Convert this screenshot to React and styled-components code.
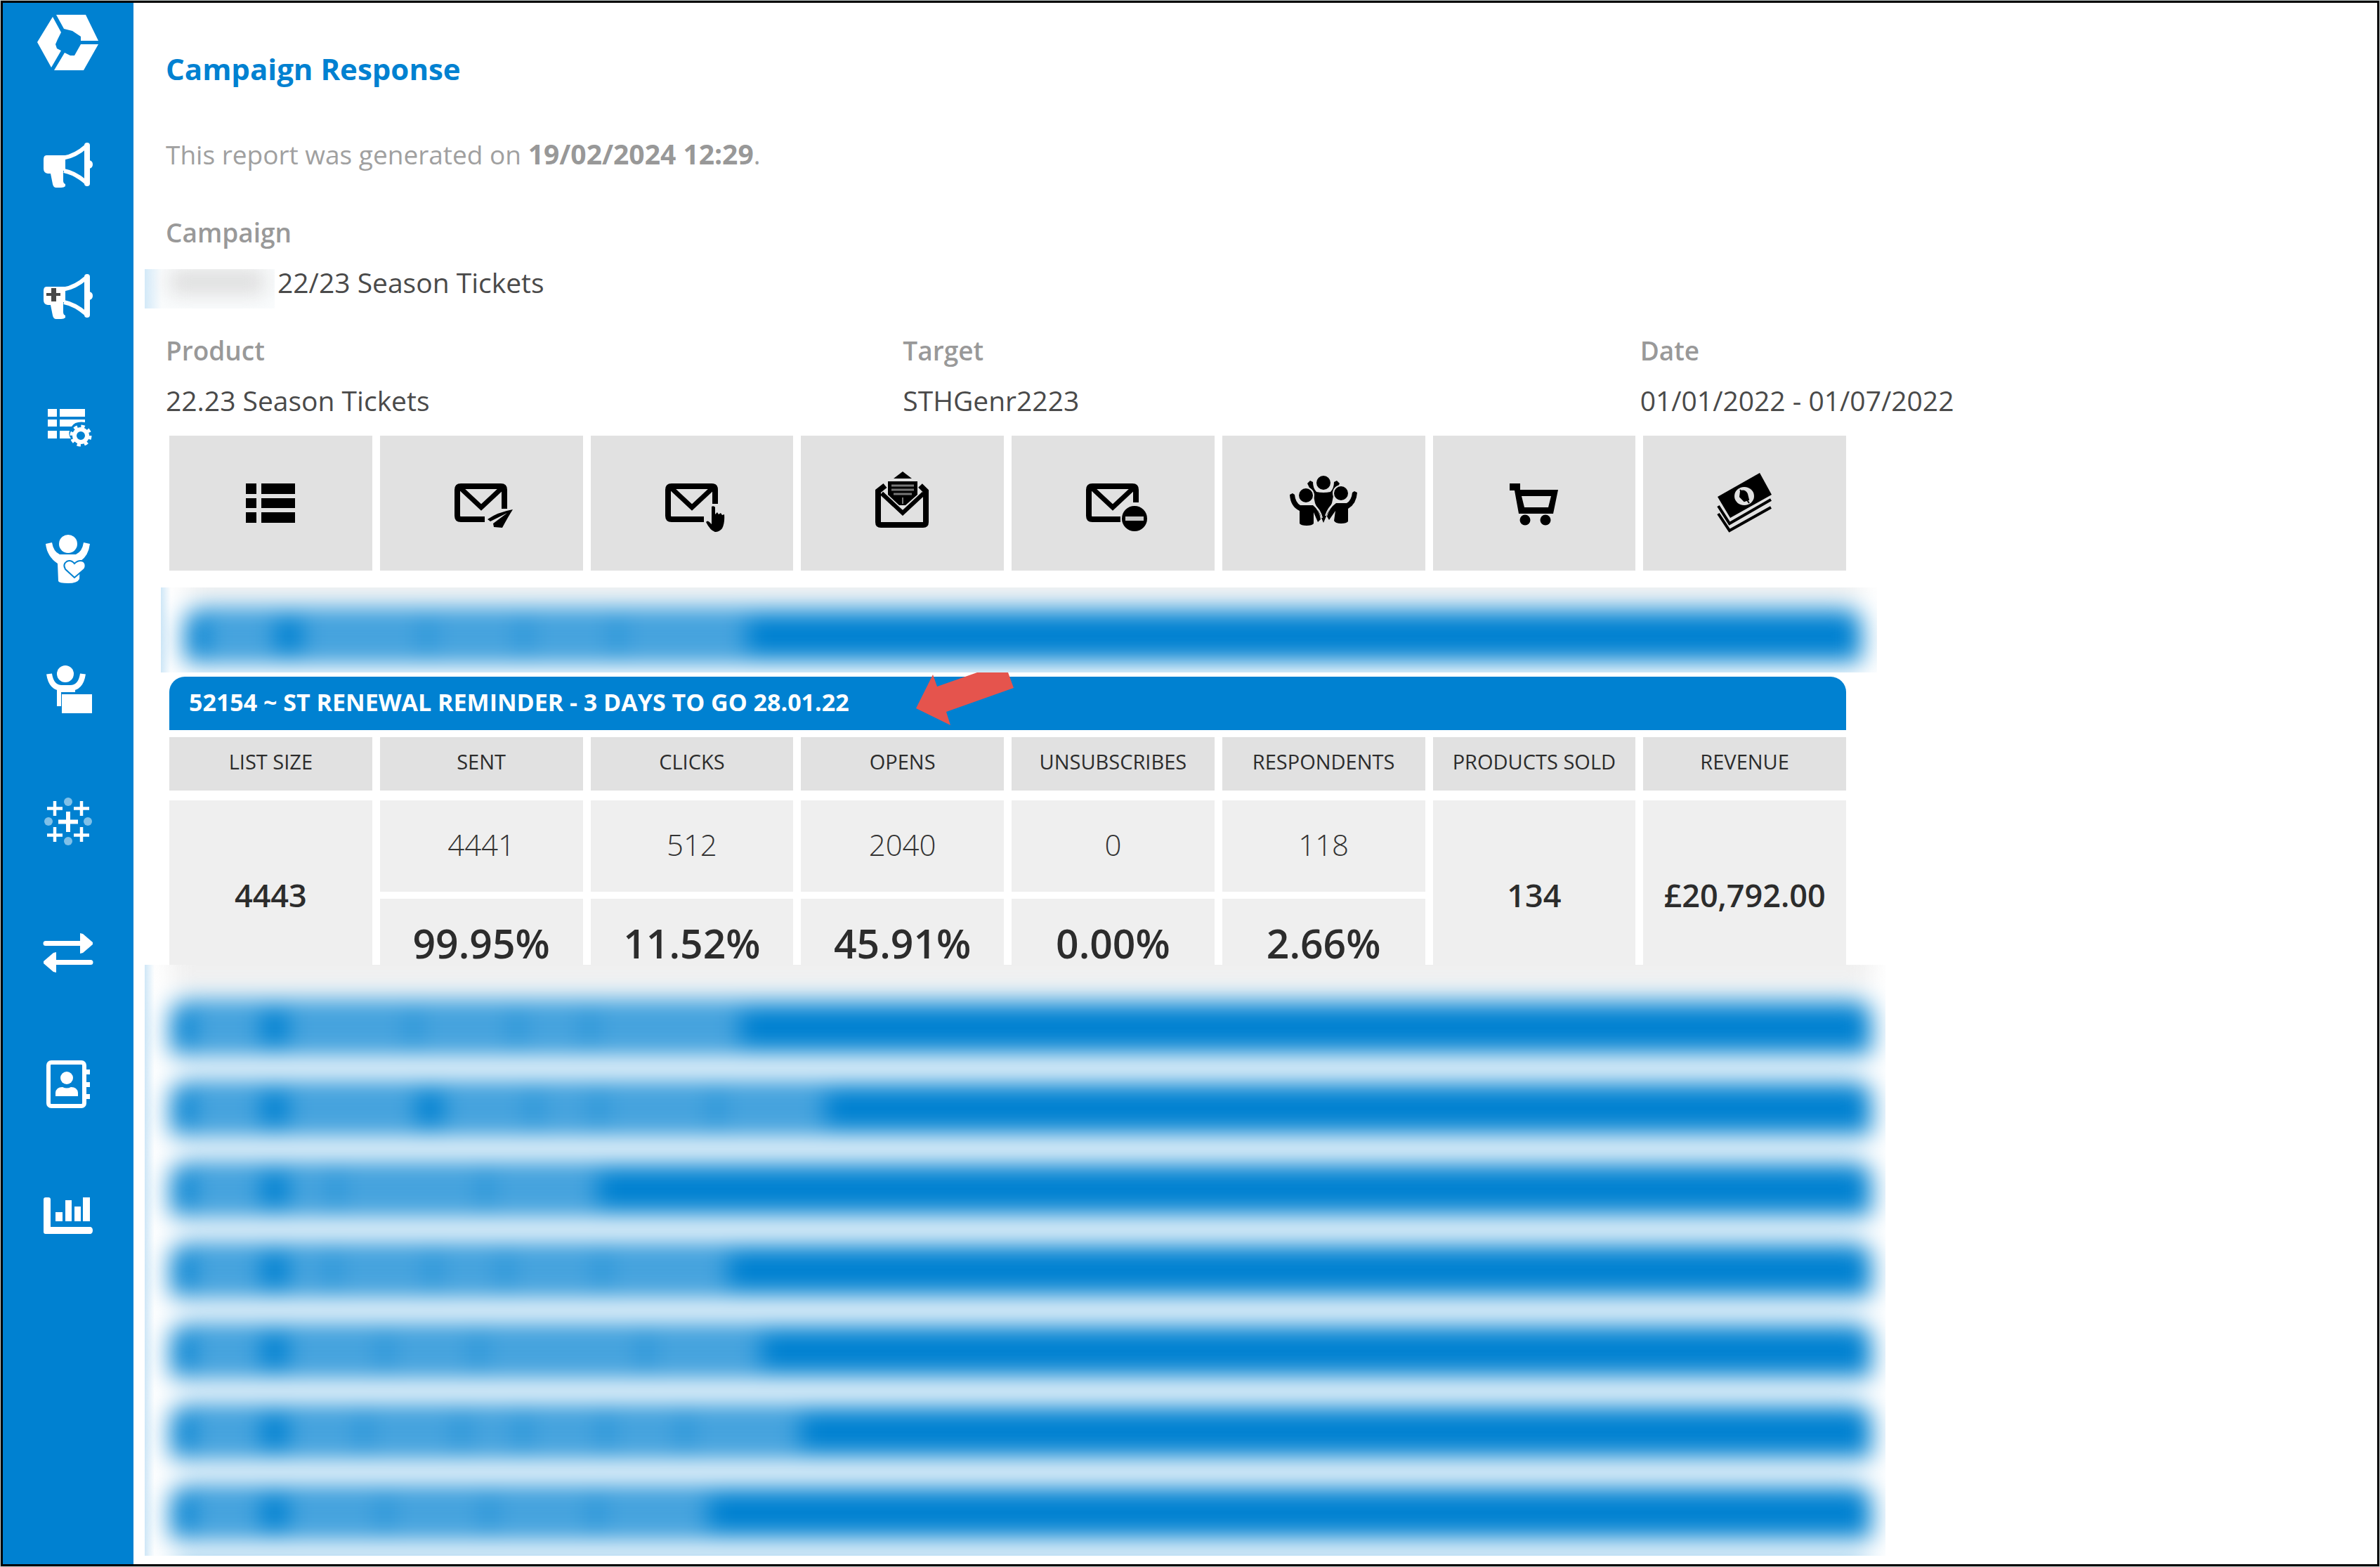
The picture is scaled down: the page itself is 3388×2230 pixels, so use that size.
import React from "react";
import styled, { createGlobalStyle } from "styled-components";

const BLUE = "#0081d1";

const GlobalStyle = createGlobalStyle`
  * { box-sizing: border-box; }
  body {
    margin: 0;
    background: #fff;
    font-family: "Open Sans", "Noto Sans", sans-serif;
    color: #3f3f3f;
  }
`;

const Frame = styled.div`
  display: flex;
  min-height: 100vh;
  border: 1px solid #c4cccb;
  outline: 3px solid #000;
  outline-offset: -4px;
  padding: 3px;
`;

const Sidebar = styled.nav`
  flex: 0 0 186px;
  display: flex;
  flex-direction: column;
  background: ${BLUE};
`;

const Logo = styled.a`
  display: flex;
  justify-content: center;
  height: 136px;
  padding-top: 16px;
`;

const NavLink = styled.a`
  display: flex;
  align-items: center;
  justify-content: center;
  height: 187px;
  color: #fff;
`;

const Main = styled.main`
  flex: 1;
  min-width: 0;
  padding: 66px 0 12px 46px;
`;

const Title = styled.h1`
  margin: 0 0 68px;
  font-size: 42px;
  line-height: 56px;
  font-weight: 700;
  color: ${BLUE};
`;

const Generated = styled.p`
  margin: 0 0 60px;
  font-size: 37px;
  line-height: 52px;
  color: #a0a0a0;

  strong {
    font-size: 39px;
    line-height: 48px;
    font-weight: 700;
    color: #989898;
  }
`;

const Facts = styled.dl`
  display: grid;
  grid-template-columns: repeat(3, 1fr);
  row-gap: 35px;
  margin: 0 0 22px;
`;

const Fact = styled.div`
  grid-column: ${(p) => (p.$wide ? "1 / -1" : "auto")};
`;

const Label = styled.dt`
  margin-bottom: 18px;
  font-size: 37px;
  line-height: 50px;
  font-weight: 600;
  color: #999;
`;

const Value = styled.dd`
  display: flex;
  margin: 0;
  font-size: 39px;
  line-height: 56px;
  color: #4a4a4a;
`;

const HiddenName = styled.span`
  width: 185px;
  height: 56px;
  margin: 9px 4px 0 -30px;
  padding: 0 14px 20px 36px;
  overflow: hidden;
  background: linear-gradient(to right, #d3e9f8, #fafcfd 24px);

  &::before {
    content: "";
    display: block;
    height: 100%;
    background: #dedede;
    filter: blur(14px);
  }
`;

const Report = styled.section`
  max-width: 2392px;
  padding-left: 5px;
`;

const Tiles = styled.div`
  display: grid;
  grid-template-columns: repeat(8, 1fr);
  gap: 11px;
`;

const Tile = styled.div`
  display: flex;
  align-items: center;
  justify-content: center;
  height: 192px;
  background: #e1e1e1;
  color: #000;
`;

const Redacted = styled.div`
  position: relative;
  height: ${(p) => p.$height}px;
  margin: ${(p) => p.$margin};
  overflow: hidden;
  background: linear-gradient(to right, #cfe7f7, #fff 14px);
`;

const Haze = styled.div`
  display: flex;
  flex-direction: column;
  gap: 40px;
  padding: ${(p) => p.$padding};
  filter: blur(17px);
`;

const HazeTop = styled.div`
  flex: none;
  height: ${(p) => p.$lift + 10}px;
  margin-top: ${(p) => -p.$lift - 30}px;
  margin-bottom: -20px;
  background: #efefef;
`;

const HazeBar = styled.div`
  flex: none;
  display: flex;
  align-items: center;
  height: 75px;
  padding-left: 30px;
  border-radius: 22px 22px 0 0;
  background: ${BLUE};
`;

const Word = styled.span`
  width: ${(p) => p.$width}px;
  height: 44px;
  margin-right: 8px;
  margin-left: ${(p) => (p.$apart ? 28 : 0)}px;
  background: rgba(255, 255, 255, 0.32);
`;

const BarWrap = styled.div`
  position: relative;
`;

const CampaignBar = styled.button`
  display: block;
  width: 100%;
  height: 76px;
  padding: 0 28px 4px;
  border: 0;
  border-radius: 22px 22px 0 0;
  background: ${BLUE};
  color: #fff;
  font-family: inherit;
  font-size: 34px;
  font-weight: 700;
  line-height: 70px;
  text-align: left;
`;

const Pointer = styled.svg`
  position: absolute;
  left: 1063px;
  top: -6px;
`;

const Table = styled.table`
  width: calc(100% + 22px);
  margin: 0 -11px;
  table-layout: fixed;
  border-collapse: separate;
  border-spacing: 11px 10px;
  text-align: center;
`;

const HeadCell = styled.th`
  height: 80px;
  padding: 0 0 6px;
  border-bottom: 4px solid #fff;
  background: #e1e1e1;
  font-size: 29px;
  line-height: 40px;
  font-weight: 400;
  color: #2c2c2c;
  white-space: nowrap;
`;

const Cell = styled.td`
  height: 130px;
  padding: 0 0 ${(p) => (p.$kind === "total" ? 0 : 4)}px;
  background: #efefef;
  line-height: 64px;
  font-size: ${(p) => ({ count: 42, total: 45, rate: 57 })[p.$kind]}px;
  font-weight: ${(p) => (p.$kind === "count" ? 300 : 600)};
  color: ${(p) => (p.$kind === "count" ? "#333" : "#2c2c2c")};
`;

function NavIcon({ children }) {
  return (
    <svg width="72" height="72" viewBox="0 0 72 72" fill="currentColor" aria-hidden="true">
      {children}
    </svg>
  );
}

function TileIcon({ children }) {
  return (
    <svg width="98" height="96" viewBox="0 0 98 96" fill="currentColor" aria-hidden="true">
      {children}
    </svg>
  );
}

function Megaphone() {
  return (
    <>
      <path d="M5 23h27v22h-3v14q0 4 3 5v3q-2 2-6 2h-7q-4 0-5-5l-3-15H7q-6-1-6-7V29q0-6 4-6z" />
      <path d="M30 26.500Q46 24 62 10M30 45Q46 48 62 62" fill="none" stroke="currentColor" strokeWidth="6" />
      <rect x="59" y="5" width="8" height="62" rx="4" />
      <path d="M66 30q5 1 5 6t-5 6z" />
    </>
  );
}

const navItems = [
  { name: "Campaigns", icon: <Megaphone /> },
  {
    name: "New campaign",
    icon: (
      <>
        <Megaphone />
        <path d="M12 25h7v7h6v4h-6v8h-7v-8H5v-4h7z" fill="#484848" />
      </>
    ),
  },
  {
    name: "List settings",
    icon: (
      <>
        <path d="M7 10h13v11H7zM24 10h36v11H24zM7 25h13v10H7zM24 25h36v4q-14-2-19 6H24zM7 41h13v11H7zM24 41h14q-2 6 2 11H24z" />
        <circle cx="54" cy="48" r="9" fill="none" stroke="currentColor" strokeWidth="6" />
        <circle cx="54" cy="48" r="13.500" fill="none" stroke="currentColor" strokeWidth="4" strokeDasharray="5.300 5.300" />
      </>
    ),
  },
  {
    name: "Supporters",
    icon: (
      <>
        <circle cx="36" cy="15" r="13" />
        <path d="M4 15l9-2q2 13 11 17h23q9-4 11-17l9 2q-2 17-14 25l-1 25q-3 6-16 6t-14-3l-1-25Q6 33 4 15z" />
        <path d="M45 63L32 51q-4-7 2-11 6-3 11 3 6-6 13-3 5 5 1 11z" fill="currentColor" stroke={BLUE} strokeWidth="2" />
      </>
    ),
  },
  {
    name: "Supporter products",
    icon: (
      <>
        <circle cx="32" cy="13" r="12" />
        <path d="M9 13q3 20 18 20h12q15 0 18-20" fill="none" stroke="currentColor" strokeWidth="8" />
        <path d="M20 30h26v9H26v20h-6z" />
        <path d="M27 42h43v27H27z" />
      </>
    ),
  },
  {
    name: "Insights",
    icon: (
      <>
        <path d="M36 22v29M22 36.500h28" stroke="currentColor" strokeWidth="6" />
        <path d="M17 7v21M6 17.500h22M55 7v21M44 17.500h22M17 44v21M6 55.500h22M55 44v21M44 55.500h22" stroke="currentColor" strokeWidth="4.500" />
        <g opacity="0.5">
          <circle cx="36" cy="8" r="6" />
          <circle cx="36" cy="64" r="6" />
          <circle cx="8" cy="36" r="6" />
          <circle cx="64" cy="36" r="6" />
        </g>
      </>
    ),
  },
  {
    name: "Transfers",
    icon: (
      <>
        <path d="M4 22.500h52M16 49.500h52" stroke="currentColor" strokeWidth="7" strokeLinecap="round" />
        <path d="M53 8l4 1 14 12v3L57 36l-4 1zM19 35l-4 1L1 48v3l14 12 4 1z" />
      </>
    ),
  },
  {
    name: "Contacts",
    icon: (
      <>
        <rect x="8" y="5" width="51" height="62" rx="4" fill="none" stroke="currentColor" strokeWidth="6" />
        <path d="M61 15h6v7h-6zM61 33h6v7h-6zM61 50h6v7h-6z" />
        <circle cx="34" cy="27" r="9" />
        <path d="M18 53V48q1-8 10-8 6 3 12 0 9 0 10 8v5z" />
      </>
    ),
  },
  {
    name: "Reports",
    icon: (
      <path d="M4 10h4q3 0 3 3v39h57q3 1 3 5t-3 5H4q-3 0-3-3V13q0-3 3-3zM18 31h10v13H18zM32 14h9v30h-9zM45 23h9v21h-9zM57 10h10v34H57z" />
    ),
  },
];

function Flap() {
  return <path d="M19 26L49 54L79 26" fill="none" stroke="currentColor" strokeWidth="7" />;
}

const metrics = [
  {
    name: "LIST SIZE",
    icon: <path d="M14 20h15v15H14zM36 20h48v15H36zM14 41h15v14H14zM36 41h48v14H36zM14 61h15v15H14zM36 61h48v15H36z" />,
    total: "4443",
  },
  {
    name: "SENT",
    icon: (
      <>
        <path d="M54 71H20q-5 0-5-5V29q0-5 5-5H77q5 0 5 5V56" fill="none" stroke="currentColor" strokeWidth="8" />
        <Flap />
        <path d="M58 71Q72 61 94 57Q87 68 79 83L67 82L66 77L86 62L62 74Z" />
      </>
    ),
    count: "4441",
    rate: "99.95%",
  },
  {
    name: "CLICKS",
    icon: (
      <>
        <path d="M66 71H20q-5 0-5-5V29q0-5 5-5H77q5 0 5 5V49" fill="none" stroke="currentColor" strokeWidth="8" />
        <Flap />
        <path d="M77 53q3-2 5 1v10l3-3 2 3 3-2 2 3 3-1q1 12-3 20-4 5-10 5-7-2-13-14 2-3 5 0l3 3z" />
      </>
    ),
    count: "512",
    rate: "11.52%",
  },
  {
    name: "OPENS",
    icon: (
      <>
        <path d="M36 13L49 3L62 13z" />
        <path d="M24 23L14 31V75q0 4 4 4H78q4 0 4-4V31L74 23" fill="none" stroke="currentColor" strokeWidth="8" />
        <path d="M19 34L49 62L79 34" fill="none" stroke="currentColor" strokeWidth="6" />
        <path d="M28 17H70V36L53 51H44L28 36z" />
        <path d="M33 23h32M33 29h32M36 35h26" stroke="#777" strokeWidth="3" />
        <path d="M49 40v9" stroke="#777" strokeWidth="2" />
      </>
    ),
    count: "2040",
    rate: "45.91%",
  },
  {
    name: "UNSUBSCRIBES",
    icon: (
      <>
        <path d="M60 71H20q-5 0-5-5V29q0-5 5-5H77q5 0 5 5V47" fill="none" stroke="currentColor" strokeWidth="8" />
        <Flap />
        <circle cx="80" cy="70" r="18" />
        <path d="M67 70h26" stroke="#c8c8c8" strokeWidth="6" />
      </>
    ),
    count: "0",
    rate: "0.00%",
  },
  {
    name: "RESPONDENTS",
    icon: (
      <>
        <path d="M26 20l4-4 4 2q0 9 5 14 10 2 20 0 5-5 5-14l4-2 4 4-4 8-5 10-2 10-12 28-12-28-2-10-5-10z" />
        <g stroke="#e1e1e1" strokeWidth="2">
          <circle cx="49" cy="19" r="11" />
          <circle cx="24" cy="37" r="11" />
          <circle cx="74" cy="34" r="11" />
        </g>
        <path d="M1 36l4-2 3 2q1 11 8 15h18q9 7 11 20l-4 4-6-14v16q-2 3-10 3t-10-3V59Q2 53 1 36z" />
        <path d="M97 33l-4-2-3 2q-1 11-8 15H67q-10 7-13 19l3 5 9-13-2 14q2 4 10 4t10-3V56q12-7 13-23z" />
        <path d="M35 50q9 7 12 19" fill="none" stroke="#e1e1e1" strokeWidth="2" />
        <path d="M65 47q-9 7-13 19" fill="none" stroke="#e1e1e1" strokeWidth="2" />
      </>
    ),
    count: "118",
    rate: "2.66%",
  },
  {
    name: "PRODUCTS SOLD",
    icon: (
      <>
        <path d="M14 20h15v9h54L76 63H27L21 30h-7zM31 38l4 16h34l4-16z" fillRule="evenodd" />
        <circle cx="36" cy="72" r="7.500" />
        <circle cx="65" cy="72" r="7.500" />
      </>
    ),
    total: "134",
  },
  {
    name: "REVENUE",
    icon: (
      <>
        <path d="M10 39L70 5L87 36L28 69z" />
        <ellipse cx="48" cy="38" rx="14" ry="13" fill="#e1e1e1" />
        <path d="M43 31q6-2 9 4l2 8-6 2-6-6zM42 29l13 19" fill="currentColor" stroke="currentColor" strokeWidth="2" />
        <path d="M11 52L27 77L86 43M11 63L27 87L86 54" fill="none" stroke="currentColor" strokeWidth="4" />
      </>
    ),
    total: "£20,792.00",
  },
];

const hiddenBefore = [[100, 175, 130, 125, 180]];

const hiddenAfter = [
  [100, 175, 140, 95, 210],
  [100, 185, -1, 125, 85, 160, 150],
  [100, 65, 205, 155],
  [100, 60, 135, 95, 130, 175],
  [100, 135, 125, 230, 160],
  [100, 105, 130, 80, 110, 105, 160],
  [100, 135, 140, 145, 155],
  [],
];

function HiddenBars({ rows }) {
  return rows.map((words, row) => (
    <HazeBar key={row}>
      {words.map((width, i) => (
        width > 0 && <Word key={i} $width={width} $apart={i === 1 || words[i - 1] === -1} />
      ))}
    </HazeBar>
  ));
}

export default function App() {
  return (
    <>
      <GlobalStyle />
      <Frame>
        <Sidebar aria-label="Main">
          <Logo href="#home" aria-label="Home">
            <svg width="88" height="80" viewBox="0 0 88 80" fill="#fff" aria-hidden="true">
              <path d="M27 1H69L87 38H62V32L50 24L38 21z" />
              <path d="M22 4L34 26L29 36L26 43L28 49L34 52L20 76L0 40z" />
              <path d="M62 43H87L66 80H24L39 55L47 59H53z" />
            </svg>
          </Logo>
          {navItems.map((item) => (
            <NavLink key={item.name} href="#" aria-label={item.name}>
              <NavIcon>{item.icon}</NavIcon>
            </NavLink>
          ))}
        </Sidebar>
        <Main>
          <Title>Campaign Response</Title>
          <Generated>
            This report was generated on <strong>19/02/2024 12:29</strong>.
          </Generated>
          <Facts>
            <Fact $wide>
              <Label>Campaign</Label>
              <Value>
                <HiddenName />
                22/23 Season Tickets
              </Value>
            </Fact>
            <Fact>
              <Label>Product</Label>
              <Value>22.23 Season Tickets</Value>
            </Fact>
            <Fact>
              <Label>Target</Label>
              <Value>STHGenr2223</Value>
            </Fact>
            <Fact>
              <Label>Date</Label>
              <Value>01/01/2022 - 01/07/2022</Value>
            </Fact>
          </Facts>
          <Report>
            <Tiles>
              {metrics.map((m) => (
                <Tile key={m.name}>
                  <TileIcon>{m.icon}</TileIcon>
                </Tile>
              ))}
            </Tiles>
            <Redacted $height={121} $margin="24px -44px 6px -12px">
              <Haze $padding="31px 22px 0 34px">
                <HazeTop $lift={31} />
                <HiddenBars rows={hiddenBefore} />
              </Haze>
            </Redacted>
            <BarWrap>
              <CampaignBar type="button" aria-expanded="true">
                52154 ~ ST RENEWAL REMINDER - 3 DAYS TO GO 28.01.22
              </CampaignBar>
              <Pointer width="140" height="76" viewBox="0 0 140 76" aria-hidden="true">
                <path d="M0 51L24 3L30 20L87 0H131L139 22L43 56L49 75z" fill="#e5544d" />
              </Pointer>
            </BarWrap>
            <Table>
              <thead>
                <tr>
                  {metrics.map((m) => (
                    <HeadCell key={m.name} scope="col">{m.name}</HeadCell>
                  ))}
                </tr>
              </thead>
              <tbody>
                <tr>
                  {metrics.map((m) =>
                    m.total ? (
                      <Cell key={m.name} rowSpan={2} $kind="total">{m.total}</Cell>
                    ) : (
                      <Cell key={m.name} $kind="count">{m.count}</Cell>
                    )
                  )}
                </tr>
                <tr>
                  {metrics.filter((m) => m.rate).map((m) => (
                    <Cell key={m.name} $kind="rate">{m.rate}</Cell>
                  ))}
                </tr>
              </tbody>
            </Table>
            <Redacted $height={841} $margin="-46px -56px 0 -35px">
              <Haze $padding="52px 20px 0 37px">
                <HazeTop $lift={52} />
                <HiddenBars rows={hiddenAfter} />
              </Haze>
            </Redacted>
          </Report>
        </Main>
      </Frame>
    </>
  );
}
